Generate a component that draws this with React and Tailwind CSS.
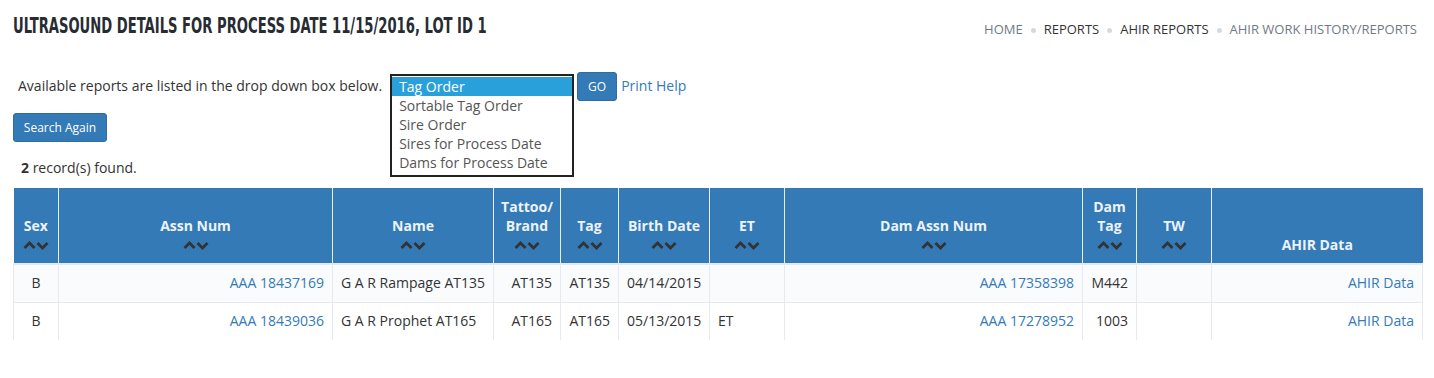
import React from 'react';

const cols = [
  { key: 'sex', label: ['Sex'], w: 45, align: 'text-center', sort: true },
  { key: 'assn', label: ['Assn Num'], w: 274, align: 'text-right', sort: true, link: true },
  { key: 'name', label: ['Name'], w: 161, align: 'text-left', sort: true },
  { key: 'tattoo', label: ['Tattoo/', 'Brand'], w: 67, align: 'text-right', sort: true },
  { key: 'tag', label: ['Tag'], w: 58, align: 'text-right', sort: true },
  { key: 'birth', label: ['Birth Date'], w: 91, align: 'text-left', sort: true },
  { key: 'et', label: ['ET'], w: 75, align: 'text-left', sort: true },
  { key: 'dam', label: ['Dam Assn Num'], w: 298, align: 'text-right', sort: true, link: true },
  { key: 'damTag', label: ['Dam', 'Tag'], w: 54, align: 'text-right', sort: true },
  { key: 'tw', label: ['TW'], w: 75, align: 'text-left', sort: true },
  { key: 'ahir', label: ['AHIR Data'], w: 211, align: 'text-right', sort: false, link: true },
];

const rows = [
  { sex: 'B', assn: 'AAA 18437169', name: 'G A R Rampage AT135', tattoo: 'AT135', tag: 'AT135', birth: '04/14/2015', et: '', dam: 'AAA 17358398', damTag: 'M442', tw: '', ahir: 'AHIR Data' },
  { sex: 'B', assn: 'AAA 18439036', name: 'G A R Prophet AT165', tattoo: 'AT165', tag: 'AT165', birth: '05/13/2015', et: 'ET', dam: 'AAA 17278952', damTag: '1003', tw: '', ahir: 'AHIR Data' },
];

const reports = ['Tag Order', 'Sortable Tag Order', 'Sire Order', 'Sires for Process Date', 'Dams for Process Date'];

// up + down chevrons under each sortable header
const SortArrows = () => (
  <svg width="26" height="10" viewBox="0 0 26 10" className="mx-auto block">
    <path d="M1.5 8 L6.5 3 L11.5 8" fill="none" stroke="#333" strokeWidth="2.8" />
    <path d="M14.5 3 L19.5 8 L24.5 3" fill="none" stroke="#333" strokeWidth="2.8" />
  </svg>
);

const Crumb = ({ children, dark }) => (
  <span className={dark ? 'text-[#333]' : 'text-[#6f7a86]'}>{children}</span>
);

const Dot = () => <span className="mx-[8px] inline-block h-[5px] w-[5px] rounded-full bg-[#d5d9de] align-middle" />;

export default function App() {
  return (
    <div className="min-h-[378px] bg-white px-[13px] text-[14px] text-[#333]" style={{ fontFamily: '"Open Sans", "Noto Sans", sans-serif' }}>
      <div className="flex items-start justify-between pt-[14px]">
        <h1
          className="origin-left scale-x-[0.665] whitespace-nowrap text-[22px] font-bold uppercase leading-[24px] text-[#272c33]"
          style={{ fontFamily: '"DejaVu Sans Condensed", "Liberation Sans", sans-serif', fontStretch: 'condensed' }}
        >
          Ultrasound Details for Process Date 11/15/2016, Lot ID 1
        </h1>
        <nav className="mr-[4px] mt-[6px] text-[13px] leading-[18px]">
          <Crumb>HOME</Crumb>
          <Dot />
          <Crumb dark>REPORTS</Crumb>
          <Dot />
          <Crumb dark>AHIR REPORTS</Crumb>
          <Dot />
          <Crumb>AHIR WORK HISTORY/REPORTS</Crumb>
        </nav>
      </div>

      <div className="mt-[34px] flex items-start">
        <p className="mt-[4px] pl-[5px] leading-[20px]">Available reports are listed in the drop down box below.</p>
        <div className="ml-[8px] mt-[2px] w-[184px] border-2 border-[#222] pb-[3px] pt-px">
          {reports.map((r, i) => (
            <div key={r} className={`h-[19px] pl-[7px] leading-[19px] ${i === 0 ? 'bg-[#29a0da] text-white' : 'text-[#555]'}`}>
              {r}
            </div>
          ))}
        </div>
        <button className="ml-[3px] h-[29px] w-[40px] rounded-[3px] border border-[#2e6da4] bg-[#337ab7] text-[12px] text-white">GO</button>
        <a className="ml-[4px] mt-[4px] leading-[20px] text-[#337ab7]">Print Help</a>
      </div>

      <button className="-mt-[64px] block h-[29px] w-[94px] rounded-[3px] border border-[#2e6da4] bg-[#337ab7] text-[12px] text-white">Search Again</button>

      <p className="mt-[16px] pl-[8px] leading-[20px]">
        <b>2</b> record(s) found.
      </p>

      <table className="mt-[10px] w-[1409px] table-fixed border-collapse">
        <colgroup>
          {cols.map(c => <col key={c.key} style={{ width: c.w }} />)}
        </colgroup>
        <thead>
          <tr className="h-[76px] bg-[#337ab7]">
            {cols.map((c, i) => (
              <th
                key={c.key}
                className={`px-[4px] pb-[9px] pt-[8px] text-center align-bottom text-[14px] font-bold leading-[19px] text-[#eef2f6] ${i > 0 ? 'border-l border-[#e8eef5]' : ''}`}
              >
                {c.label.map(l => <div key={l}>{l}</div>)}
                {c.sort ? <div className="flex h-[19px] items-center"><SortArrows /></div> : null}
              </th>
            ))}
          </tr>
        </thead>
        <tbody>
          {rows.map((r, ri) => (
            <tr key={ri} className={`h-[38px] ${ri === 0 ? 'border-t-2 border-[#e3e9f0] bg-[#f9fbfd]' : 'border-t border-[#e6e9ed] bg-white'}`}>
              {cols.map((c, i) => (
                <td
                  key={c.key}
                  className={`border-l border-[#e6e9ed] px-[8px] leading-[20px] ${c.align} ${c.link ? 'text-[#337ab7]' : 'text-[#333]'} ${i === cols.length - 1 ? 'border-r' : ''}`}
                >
                  {r[c.key]}
                </td>
              ))}
            </tr>
          ))}
        </tbody>
      </table>
    </div>
  );
}
